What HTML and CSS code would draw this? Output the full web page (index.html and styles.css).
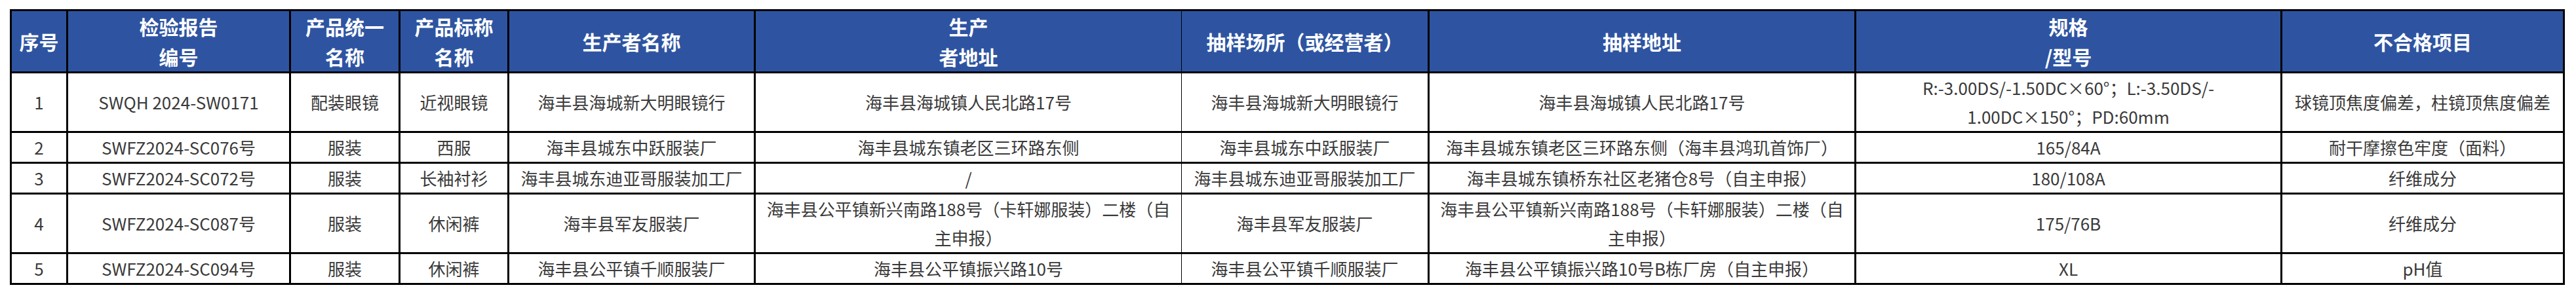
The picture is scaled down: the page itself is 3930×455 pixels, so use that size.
FILE: index.html
```html
<!DOCTYPE html>
<html lang="zh-CN">
<head>
<meta charset="utf-8">
<title>不合格产品信息</title>
<link rel="stylesheet" href="styles.css">
</head>
<body>
<div class="page">
<table class="report">
  <colgroup>
    <col class="c1"><col class="c2"><col class="c3"><col class="c4"><col class="c5">
    <col class="c6"><col class="c7"><col class="c8"><col class="c9"><col class="c10">
  </colgroup>
  <thead>
    <tr>
      <th>序号</th>
      <th>检验报告<br>编号</th>
      <th>产品统一<br>名称</th>
      <th>产品标称<br>名称</th>
      <th>生产者名称</th>
      <th>生产<br>者地址</th>
      <th>抽样场所（或经营者）</th>
      <th>抽样地址</th>
      <th>规格<br>/型号</th>
      <th>不合格项目</th>
    </tr>
  </thead>
  <tbody>
    <tr>
      <td>1</td>
      <td>SWQH 2024-SW0171</td>
      <td>配装眼镜</td>
      <td>近视眼镜</td>
      <td>海丰县海城新大明眼镜行</td>
      <td>海丰县海城镇人民北路17号</td>
      <td>海丰县海城新大明眼镜行</td>
      <td>海丰县海城镇人民北路17号</td>
      <td>R:-3.00DS/-1.50DC×60°；L:-3.50DS/-<br>1.00DC×150°；PD:60mm</td>
      <td>球镜顶焦度偏差，柱镜顶焦度偏差</td>
    </tr>
    <tr>
      <td>2</td>
      <td>SWFZ2024-SC076号</td>
      <td>服装</td>
      <td>西服</td>
      <td>海丰县城东中跃服装厂</td>
      <td>海丰县城东镇老区三环路东侧</td>
      <td>海丰县城东中跃服装厂</td>
      <td>海丰县城东镇老区三环路东侧（海丰县鸿玑首饰厂）</td>
      <td>165/84A</td>
      <td>耐干摩擦色牢度（面料）</td>
    </tr>
    <tr>
      <td>3</td>
      <td>SWFZ2024-SC072号</td>
      <td>服装</td>
      <td>长袖衬衫</td>
      <td>海丰县城东迪亚哥服装加工厂</td>
      <td>/</td>
      <td>海丰县城东迪亚哥服装加工厂</td>
      <td>海丰县城东镇桥东社区老猪仓8号（自主申报）</td>
      <td>180/108A</td>
      <td>纤维成分</td>
    </tr>
    <tr>
      <td>4</td>
      <td>SWFZ2024-SC087号</td>
      <td>服装</td>
      <td>休闲裤</td>
      <td>海丰县军友服装厂</td>
      <td>海丰县公平镇新兴南路188号（卡轩娜服装）二楼（自<br>主申报）</td>
      <td>海丰县军友服装厂</td>
      <td>海丰县公平镇新兴南路188号（卡轩娜服装）二楼（自<br>主申报）</td>
      <td>175/76B</td>
      <td>纤维成分</td>
    </tr>
    <tr>
      <td>5</td>
      <td>SWFZ2024-SC094号</td>
      <td>服装</td>
      <td>休闲裤</td>
      <td>海丰县公平镇千顺服装厂</td>
      <td>海丰县公平镇振兴路10号</td>
      <td>海丰县公平镇千顺服装厂</td>
      <td>海丰县公平镇振兴路10号B栋厂房（自主申报）</td>
      <td>XL</td>
      <td>pH值</td>
    </tr>
  </tbody>
</table>
</div>
</body>
</html>
```
FILE: styles.css
```css
html, body {
  margin: 0;
  padding: 0;
  background: #ffffff;
}

.page {
  padding: 14px 0 0 15px;
}

.report {
  border-collapse: collapse;
  table-layout: fixed;
  width: 3898px;
  font-family: "Noto Sans CJK SC", "Noto Sans", sans-serif;
}

.c1 { width: 86px; }
.c2 { width: 340px; }
.c3 { width: 167px; }
.c4 { width: 166px; }
.c5 { width: 376px; }
.c6 { width: 651px; }
.c7 { width: 377px; }
.c8 { width: 651px; }
.c9 { width: 650px; }
.c10 { width: 431px; }

.report th,
.report td {
  border: 3px solid #000000;
  text-align: center;
  vertical-align: middle;
  padding: 0 4px;
  white-space: nowrap;
}

.report th {
  background: #2e54a1;
  color: #ffffff;
  font-weight: 700;
  font-size: 30px;
  line-height: 46px;
}

.report td {
  color: #3a3a3a;
  font-size: 26px;
  line-height: 44px;
  font-weight: 400;
}

.report th:nth-child(6),
.report td:nth-child(6) {
  border-right-width: 1px;
}

.report th:nth-child(7),
.report td:nth-child(7) {
  border-left-width: 1px;
}
```
